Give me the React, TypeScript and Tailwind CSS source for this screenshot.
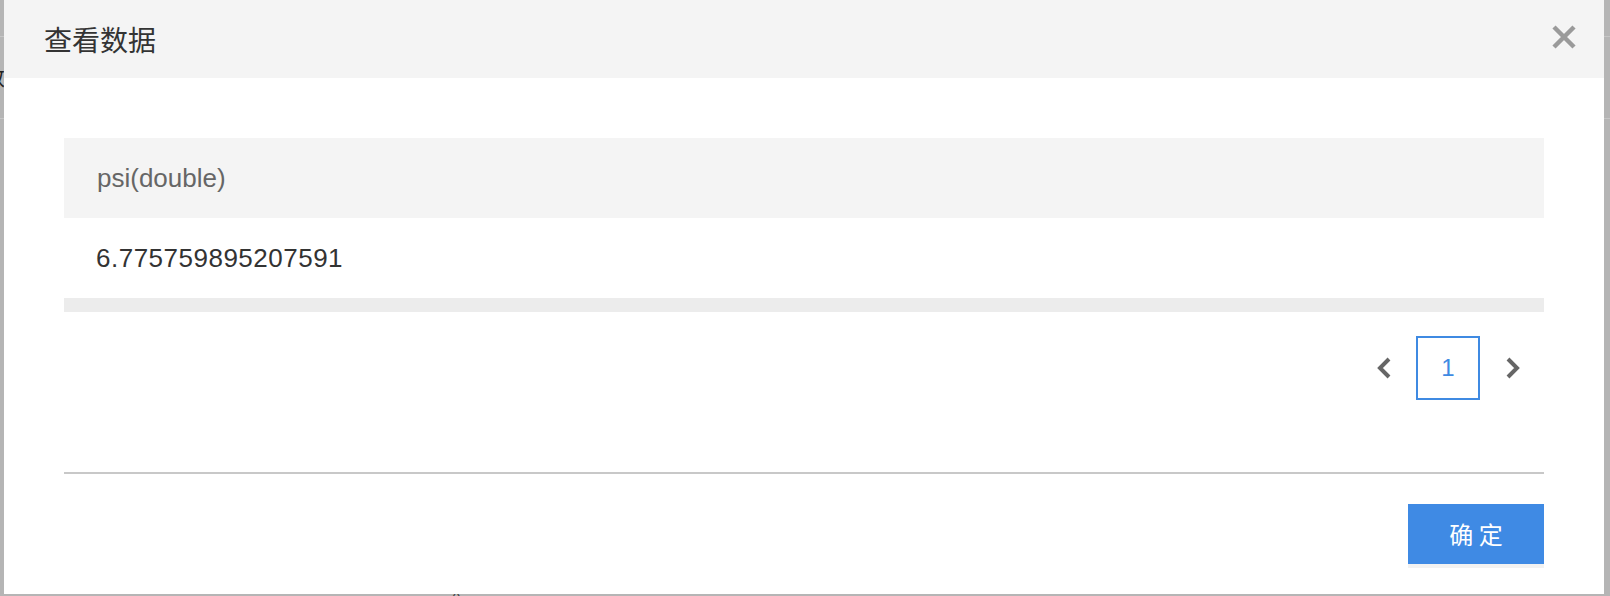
import React from 'react';

const rows = [{ psi: '6.775759895207591' }];

const Chevron: React.FC<{ dir: 'left' | 'right' }> = ({ dir }) => (
  <svg width="16" height="22" viewBox="0 0 16 22" fill="none">
    <polyline
      points={dir === 'left' ? '13,2 4,11 13,20' : '3,2 12,11 3,20'}
      stroke="#666666"
      strokeWidth="4"
    />
  </svg>
);

const App: React.FC = () => {
  return (
    <div
      className="relative w-[1610px] h-[596px] overflow-hidden bg-[#b5b5b5]"
      style={{ fontFamily: '"Liberation Sans", "Noto Sans CJK SC", sans-serif' }}
    >
      {/* page behind the overlay */}
      <div className="absolute left-0 right-0 top-[36px] h-px bg-[#c6c6c6]"></div>
      <div className="absolute left-0 right-0 top-[118px] h-px bg-[#c6c6c6]"></div>
      <div className="absolute left-[-17px] top-[64px] text-[22px] leading-[28px] text-[#222]">数</div>
      <div className="absolute left-[451px] top-[590px] text-[16px] leading-[20px] text-[#444]">()</div>

      {/* modal */}
      <div className="absolute left-[4px] top-0 w-[1600px] h-[594px] bg-white flex flex-col">
        <div className="h-[78px] bg-[#f4f4f4] flex items-center justify-between pl-[40px] pr-[28px]">
          <span className="text-[28px] text-[#333]" style={{ fontFamily: '"Noto Sans CJK SC", sans-serif' }}>
            查看数据
          </span>
          <svg width="24" height="24" viewBox="0 0 24 24" className="mt-[-4px]">
            <path d="M2 2 L22 22 M22 2 L2 22" stroke="#9a9a9a" strokeWidth="4.5" />
          </svg>
        </div>

        <div className="px-[60px] pt-[60px] flex flex-col">
          <div className="h-[80px] bg-[#f4f4f4] flex items-center pl-[33px] text-[26px] text-[#666]">
            psi(double)
          </div>
          {rows.map(r => (
            <div key={r.psi} className="h-[80px] flex items-center pl-[32px] text-[26px] tracking-[0.5px] text-[#333]">
              {r.psi}
            </div>
          ))}
          <div className="h-[14px] bg-[#ececec]"></div>

          <div className="mt-[24px] flex items-center justify-end pr-[11px]">
            <button className="w-[40px] h-[63px] flex items-center justify-center">
              <Chevron dir="left" />
            </button>
            <div className="ml-[12px] w-[64px] h-[64px] border-2 border-[#3f8ae2] flex items-center justify-center text-[24px] text-[#3f8ae2]">
              1
            </div>
            <button className="ml-[13px] w-[40px] h-[63px] flex items-center justify-center">
              <Chevron dir="right" />
            </button>
          </div>

          <div className="mt-[72px] h-[2px] bg-[#c8c8c8]"></div>

          <div className="mt-[30px] flex justify-end">
            <button className="w-[136px] h-[60px] bg-[#3f8ae4] text-white text-[24px] shadow-[0_4px_0_#f2f2f2]"
              style={{ fontFamily: '"Noto Sans CJK SC", sans-serif' }}>
              确 定
            </button>
          </div>
        </div>
      </div>
    </div>
  );
};

export default App;
